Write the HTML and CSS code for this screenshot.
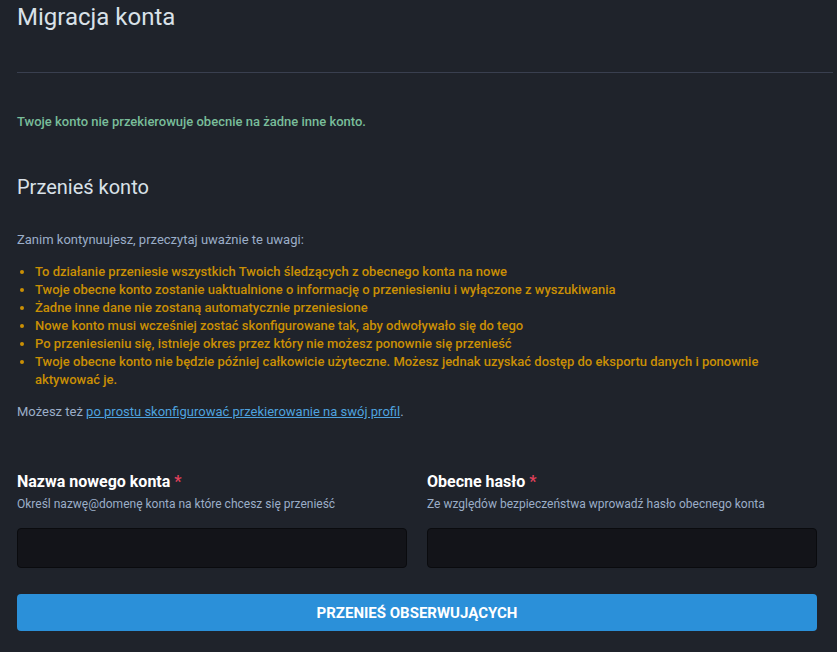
FILE: index.html
```html
<!DOCTYPE html>
<html lang="pl">
<head>
<meta charset="utf-8">
<link rel="stylesheet" href="styles.css">
</head>
<body>
<div class="page">
  <div class="heading">
    <h1 class="title">Migracja konta</h1>
  </div>
  <p class="status">Twoje konto nie przekierowuje obecnie na żadne inne konto.</p>
  <h2 class="subtitle">Przenieś konto</h2>
  <p class="intro">Zanim kontynuujesz, przeczytaj uważnie te uwagi:</p>
  <ul class="warnings">
    <li>To działanie przeniesie wszystkich Twoich śledzących z obecnego konta na nowe</li>
    <li>Twoje obecne konto zostanie uaktualnione o informację o przeniesieniu i wyłączone z wyszukiwania</li>
    <li>Żadne inne dane nie zostaną automatycznie przeniesione</li>
    <li>Nowe konto musi wcześniej zostać skonfigurowane tak, aby odwoływało się do tego</li>
    <li>Po przeniesieniu się, istnieje okres przez który nie możesz ponownie się przenieść</li>
    <li>Twoje obecne konto nie będzie później całkowicie użyteczne. Możesz jednak uzyskać dostęp do eksportu danych i ponownie aktywować je.</li>
  </ul>
  <p class="intro">Możesz też <a class="link" href="#">po prostu skonfigurować przekierowanie na swój profil</a>.</p>
  <form class="form">
    <div class="fields">
      <div class="field">
        <label class="label">Nazwa nowego konta <span class="req">*</span></label>
        <span class="hint">Określ nazwę@domenę konta na które chcesz się przenieść</span>
        <input class="input" type="text">
      </div>
      <div class="field">
        <label class="label">Obecne hasło <span class="req">*</span></label>
        <span class="hint">Ze względów bezpieczeństwa wprowadź hasło obecnego konta</span>
        <input class="input" type="password">
      </div>
    </div>
    <button class="button" type="button">Przenieś obserwujących</button>
  </form>
</div>
</body>
</html>
```
FILE: styles.css
```css
html, body {
  margin: 0;
  padding: 0;
  background: #1f232b;
  font-family: Roboto, "Noto Sans", sans-serif;
  color: #d9e1e8;
}
.page {
  padding: 0 20px 0 17px;
  width: 800px;
}
.heading {
  border-bottom: 1px solid #393f4f;
  margin-right: -16px;
  padding-bottom: 38px;
  margin-bottom: 40px;
}
.title {
  margin: 0;
  font-size: 24px;
  font-weight: 400;
  line-height: 34px;
  color: #d9e1e8;
}
.status {
  margin: 0 0 42px;
  font-size: 13px;
  font-weight: 500;
  line-height: 18px;
  color: #79bd9a;
}
.subtitle {
  margin: 0 0 30px;
  font-size: 20px;
  font-weight: 400;
  line-height: 28px;
  color: #d9e1e8;
}
.intro {
  margin: 0;
  font-size: 13px;
  line-height: 18px;
  color: #9baec8;
}
.link {
  color: #4ea2df;
  text-decoration: underline;
}
.warnings {
  margin: 14px 0 14px;
  padding: 0 0 0 18px;
  list-style: disc;
  color: #ca8f04;
  font-size: 13px;
  font-weight: 500;
  line-height: 18px;
}
.warnings li::marker {
  color: #ca8f04;
}
.form {
  margin-top: 50px;
}
.fields {
  display: grid;
  grid-template-columns: 1fr 1fr;
  column-gap: 20px;
}
.field {
  display: flex;
  flex-direction: column;
}
.label {
  font-size: 16px;
  font-weight: 700;
  line-height: 22px;
  color: #ffffff;
}
.req {
  color: #df405a;
}
.hint {
  margin-top: 3px;
  font-size: 12px;
  line-height: 16px;
  color: #9baec8;
}
.input {
  margin-top: 16px;
  height: 40px;
  box-sizing: border-box;
  background: #131419;
  border: 1px solid #0a0b0e;
  border-radius: 4px;
  color: #fff;
  font: inherit;
  padding: 0 10px;
}
.button {
  display: block;
  margin-top: 26px;
  width: 100%;
  height: 37px;
  border: 0;
  border-radius: 4px;
  background: #2b90d9;
  color: #ffffff;
  font-family: Roboto, "Noto Sans", sans-serif;
  font-size: 15px;
  font-weight: 700;
  text-transform: uppercase;
  cursor: pointer;
}
```
